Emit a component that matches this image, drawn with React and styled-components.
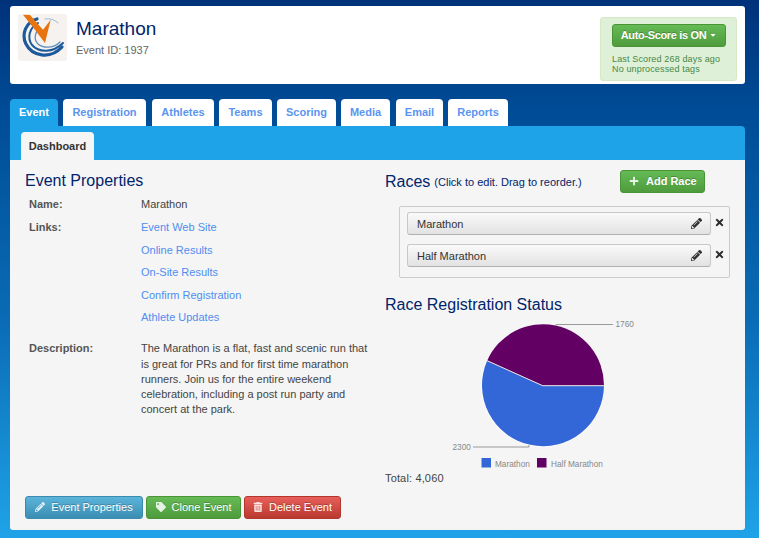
import React from 'react';
import styled, { createGlobalStyle, css } from 'styled-components';
import { FaCaretDown, FaPlus, FaPencilAlt, FaTimes, FaTag, FaTrashAlt } from 'react-icons/fa';

const GlobalStyle = createGlobalStyle`
  html, body { margin: 0; padding: 0; }
  body {
    width: 759px;
    height: 538px;
    overflow: hidden;
    font-family: "Liberation Sans", Arial, sans-serif;
    font-size: 11px;
    color: #444;
    background: linear-gradient(180deg, #00327a 0%, #004b95 20%, #0a6cb6 60%, #1fa3e8 100%);
  }
`;

const Page = styled.div`
  box-sizing: border-box;
  width: 759px;
  height: 538px;
  padding: 6px 14px 8px 10px;
  display: flex;
  flex-direction: column;
`;

const Header = styled.header`
  box-sizing: border-box;
  height: 78px;
  background: #fff;
  border-radius: 3px;
  padding: 8px 8px 3px 8px;
  display: flex;
  margin-bottom: 15px;
`;

const Logo = styled.svg`
  width: 49px;
  height: 47px;
  flex: none;
  border-radius: 3px;
  background: #f5f2ef;
  margin-right: 9px;
`;

const EventInfo = styled.div`
  flex: 1;
`;

const EventName = styled.div`
  font-size: 19px;
  line-height: 22px;
  margin-top: 4px;
  color: #00246b;
`;

const EventId = styled.div`
  font-size: 11px;
  line-height: 14px;
  margin-top: 3px;
  color: #666;
`;

const ScoreBox = styled.div`
  box-sizing: border-box;
  width: 137px;
  margin-top: 3px;
  background: #dff0d8;
  border: 1px solid #d6e9c6;
  border-radius: 3px;
  padding: 6px 11px;
`;

const buttonColors = {
  green: css`
    background: linear-gradient(180deg, #65bb55, #4f9b3d);
    border-color: #4a9438;
  `,
  blue: css`
    background: linear-gradient(180deg, #5cb4da, #3b8db2);
    border-color: #3a8bb0;
  `,
  red: css`
    background: linear-gradient(180deg, #e85f5a, #b9392f);
    border-color: #b3362d;
  `,
};

const Button = styled.button`
  box-sizing: border-box;
  display: inline-flex;
  align-items: center;
  justify-content: center;
  gap: 6px;
  height: 23px;
  width: ${(p) => p.$width}px;
  padding: 0 0 2px;
  border: 1px solid;
  border-radius: 3px;
  font-family: inherit;
  font-size: 11px;
  color: #fff;
  text-shadow: 0 -1px 0 rgba(0, 0, 0, 0.25);
  ${(p) => buttonColors[p.$color]}
  svg { font-size: 10px; flex: none; opacity: 0.85; }
`;

const AutoScoreButton = styled(Button)`
  font-weight: 700;
  letter-spacing: -0.35px;
  gap: 3px;
  svg { font-size: 8px; opacity: 1; }
`;

const ScoreNote = styled.div`
  font-size: 9px;
  line-height: 9.5px;
  letter-spacing: 0.15px;
  margin-top: 8px;
  color: #468847;
`;

const Tabs = styled.nav`
  display: flex;
  height: 27px;
`;

const Tab = styled.div`
  box-sizing: border-box;
  width: ${(p) => p.$width}px;
  margin-right: ${(p) => p.$gap}px;
  text-align: center;
  line-height: 27px;
  font-weight: 700;
  font-size: 11px;
  border-radius: 4px 4px 0 0;
  color: ${(p) => (p.$active ? '#fff' : '#5b95f0')};
  background: ${(p) => (p.$active ? '#1fa3e8' : '#fff')};
`;

const Panel = styled.main`
  flex: 1;
  display: flex;
  flex-direction: column;
  background: #1fa3e8;
  border-radius: 0 4px 4px 4px;
`;

const SubTabs = styled.div`
  display: flex;
  padding: 6px 0 0 11px;
`;

const SubTab = styled.div`
  width: 73px;
  height: 28px;
  line-height: 28px;
  text-align: center;
  font-weight: 700;
  font-size: 11px;
  color: #333;
  background: #f5f5f5;
  border-radius: 4px 4px 0 0;
`;

const Content = styled.div`
  flex: 1;
  display: grid;
  grid-template-columns: 360px 1fr;
  padding: 11px 15px 11px 15px;
  background: #f5f5f5;
  border-radius: 0 0 3px 3px;
`;

const LeftColumn = styled.section`
  display: flex;
  flex-direction: column;
`;

const RightColumn = styled.section`
  display: flex;
  flex-direction: column;
`;

const Heading = styled.h2`
  margin: 0;
  font-size: 16px;
  font-weight: 400;
  line-height: 20px;
  color: #00246b;
`;

const PropertyRow = styled.div`
  display: grid;
  grid-template-columns: 112px 228px;
  padding-left: 4px;
  margin-top: ${(p) => p.$top}px;
`;

const PropertyLabel = styled.div`
  font-weight: 700;
  color: #555;
  line-height: 15px;
`;

const PropertyValue = styled.div`
  line-height: 15.3px;
  color: #444;
`;

const LinkList = styled.div`
  display: flex;
  flex-direction: column;
  gap: 7.5px;
  line-height: 15px;
`;

const PropertyLink = styled.a`
  color: #4f8df0;
`;

const ActionBar = styled.div`
  display: flex;
  gap: 3px;
  margin-top: auto;
`;

const RacesHeader = styled.div`
  display: flex;
  align-items: center;
  height: 23px;
  margin-top: -1px;
`;

const RacesHint = styled.span`
  font-size: 11px;
  margin-left: 4px;
  margin-right: 36px;
  width: 150px;
  white-space: nowrap;
  color: #00246b;
`;

const AddRaceButton = styled(Button)`
  font-weight: 700;
  gap: 7px;
`;

const RaceBox = styled.div`
  box-sizing: border-box;
  width: 331px;
  height: 72px;
  margin: 13px 0 0 14px;
  padding: 5px 0 0 7px;
  display: flex;
  flex-direction: column;
  gap: 9px;
  border: 1px solid #ccc;
  border-radius: 2px;
`;

const RaceRow = styled.div`
  display: flex;
  align-items: center;
  gap: 3px;
`;

const RaceItem = styled.div`
  box-sizing: border-box;
  flex: none;
  width: 304px;
  height: 23px;
  padding: 0 8px 0 9px;
  display: flex;
  align-items: center;
  justify-content: space-between;
  color: #333;
  background: linear-gradient(180deg, #fafafa, #e2e2e2);
  border: 1px solid #c8c8c8;
  border-bottom-color: #b0b0b0;
  border-radius: 3px;
  svg { font-size: 11px; color: #333; }
`;

const RemoveRace = styled.span`
  display: flex;
  font-size: 11px;
  margin-top: -2px;
  color: #2c2c2c;
`;

const StatusHeading = styled(Heading)`
  margin-top: 17px;
`;

const Chart = styled.svg`
  display: block;
  width: 345px;
  height: 158px;
  margin-top: 1px;
  font-family: "Liberation Sans", Arial, sans-serif;
`;

const Total = styled.div`
  font-size: 11px;
  letter-spacing: 0.15px;
  line-height: 14px;
  margin-top: -3px;
  color: #444;
`;

const tabs = [
  { label: 'Event', width: 48, gap: 5, active: true },
  { label: 'Registration', width: 83, gap: 6 },
  { label: 'Athletes', width: 62, gap: 5 },
  { label: 'Teams', width: 53, gap: 5 },
  { label: 'Scoring', width: 59, gap: 5 },
  { label: 'Media', width: 49, gap: 6 },
  { label: 'Email', width: 47, gap: 5 },
  { label: 'Reports', width: 60, gap: 0 },
];

const links = ['Event Web Site', 'Online Results', 'On-Site Results', 'Confirm Registration', 'Athlete Updates'];
const races = ['Marathon', 'Half Marathon'];

const RaceChart = () => (
  <Chart viewBox="0 0 345 158">
    <g transform="translate(-385 -316)">
      <circle cx="542.7" cy="385.7" r="61.6" fill="#fff" opacity="0.7" />
      <path d="M542.7 385.7 L604 385.7 A61 61 0 1 1 487 361 Z" fill="#3366d6" />
      <path d="M542.7 385.7 L487 361 A61 61 0 0 1 604 385.7 Z" fill="#630063" />
      <path d="M487 360.6 L542.7 385.7 L604 385.7" fill="none" stroke="#e8e8e8" strokeWidth="1" />
      <path d="M556 326 V324.5 H613" fill="none" stroke="#999" strokeWidth="1" />
      <path d="M529 445 V447 H473" fill="none" stroke="#999" strokeWidth="1" />
      <text x="615.5" y="327" fontSize="8.25" fill="#888">1760</text>
      <text x="452.5" y="450" fontSize="8.25" fill="#888">2300</text>
      <rect x="481.5" y="458" width="9.5" height="9.5" fill="#3366d6" />
      <text x="495" y="467" fontSize="8.25" fill="#888">Marathon</text>
      <rect x="537" y="458" width="9.5" height="9.5" fill="#630063" />
      <text x="551" y="467" fontSize="8.25" fill="#888">Half Marathon</text>
    </g>
  </Chart>
);

const App = () => (
  <>
    <GlobalStyle />
    <Page>
      <Header>
        <Logo viewBox="0 0 49 47">
          <g fill="none" strokeLinecap="round">
            <path d="M19 5 C8 8 3 20 8 30 C14 42 32 46 44 33" stroke="#1d5a9c" strokeWidth="3.2" />
            <path d="M20 9 C11 14 9 24 14 31 C21 39 35 39 45 29" stroke="#1d5a9c" strokeWidth="2" />
            <path d="M22 14 C16 19 16 26 20 30 C26 35 36 34 42 28" stroke="#5f90bd" strokeWidth="1.3" />
            <path d="M27 5 C32 4 37 6 40 9" stroke="#9ab8d4" strokeWidth="1" />
          </g>
          <path d="M5 0.7 L12 1 L25 15.7 L32.7 5.7 L27 29 L14 12 Z" fill="#e8740f" />
        </Logo>
        <EventInfo>
          <EventName>Marathon</EventName>
          <EventId>Event ID: 1937</EventId>
        </EventInfo>
        <ScoreBox>
          <AutoScoreButton $color="green" $width={114}>
            Auto-Score is ON <FaCaretDown />
          </AutoScoreButton>
          <ScoreNote>
            Last Scored 268 days ago
            <br />
            No unprocessed tags
          </ScoreNote>
        </ScoreBox>
      </Header>

      <Tabs>
        {tabs.map((tab) => (
          <Tab key={tab.label} $width={tab.width} $gap={tab.gap} $active={tab.active}>
            {tab.label}
          </Tab>
        ))}
      </Tabs>

      <Panel>
        <SubTabs>
          <SubTab>Dashboard</SubTab>
        </SubTabs>
        <Content>
          <LeftColumn>
            <Heading>Event Properties</Heading>
            <PropertyRow $top={6}>
              <PropertyLabel>Name:</PropertyLabel>
              <PropertyValue>Marathon</PropertyValue>
            </PropertyRow>
            <PropertyRow $top={8}>
              <PropertyLabel>Links:</PropertyLabel>
              <LinkList>
                {links.map((link) => (
                  <PropertyLink key={link}>{link}</PropertyLink>
                ))}
              </LinkList>
            </PropertyRow>
            <PropertyRow $top={16}>
              <PropertyLabel>Description:</PropertyLabel>
              <PropertyValue>
                The Marathon is a flat, fast and scenic run that is great for PRs and for first time marathon
                runners. Join us for the entire weekend celebration, including a post run party and concert at
                the park.
              </PropertyValue>
            </PropertyRow>
            <ActionBar>
              <Button $color="blue" $width={118}>
                <FaPencilAlt /> Event Properties
              </Button>
              <Button $color="green" $width={95}>
                <FaTag /> Clone Event
              </Button>
              <Button $color="red" $width={97}>
                <FaTrashAlt /> Delete Event
              </Button>
            </ActionBar>
          </LeftColumn>

          <RightColumn>
            <RacesHeader>
              <Heading>Races</Heading>
              <RacesHint>(Click to edit. Drag to reorder.)</RacesHint>
              <AddRaceButton $color="green" $width={85}>
                <FaPlus /> Add Race
              </AddRaceButton>
            </RacesHeader>
            <RaceBox>
              {races.map((race) => (
                <RaceRow key={race}>
                  <RaceItem>
                    {race}
                    <FaPencilAlt />
                  </RaceItem>
                  <RemoveRace>
                    <FaTimes />
                  </RemoveRace>
                </RaceRow>
              ))}
            </RaceBox>
            <StatusHeading>Race Registration Status</StatusHeading>
            <RaceChart />
            <Total>Total: 4,060</Total>
          </RightColumn>
        </Content>
      </Panel>
    </Page>
  </>
);

export default App;
